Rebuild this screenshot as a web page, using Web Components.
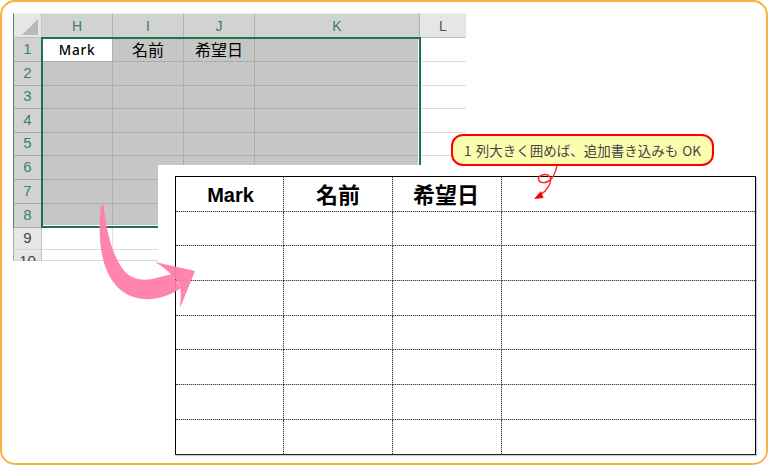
<!DOCTYPE html>
<html lang="ja">
<head>
<meta charset="utf-8">
<title>Excel</title>
<style>
  html, body { margin: 0; background: #fff; }
</style>
</head>
<body>
<sheet-frame>
  <excel-sheet></excel-sheet>
  <print-table></print-table>
  <pink-arrow></pink-arrow>
  <note-callout>1 列大きく囲めば、追加書き込みも OK</note-callout>
</sheet-frame>
<script>
// Marco naranja exterior
class SheetFrame extends HTMLElement {
  constructor () {
    super()
    this.attachShadow({ mode: 'open' })
  }

  connectedCallback () {
    this.shadowRoot.innerHTML = /* HTML */`
      <style>
        :host {
          display: block;
          position: relative;
          box-sizing: border-box;
          width: 768px;
          height: 465px;
          padding: 11px;
          border: 2px solid #fbb03f;
          border-radius: 15px;
          overflow: hidden;
          background: #fff;
        }
      </style>
      <slot></slot>
    `
  }
}

// Hoja de Excel con la seleccion
class ExcelSheet extends HTMLElement {
  static Styles = /* Css */`
    :host {
      display: block;
      position: relative;
      width: 453px;
      height: 248px;
      overflow: hidden;
      font: 14px "Liberation Sans", sans-serif;
    }
    .grid {
      display: grid;
      grid-template-columns: 29px 71px 71px 71px 165px 46px;
      grid-template-rows: 25px 24px 24px 23px 24px 23px 24px 24px 24px 22px 11px;
    }
    .head {
      display: flex;
      align-items: center;
      justify-content: center;
      box-sizing: border-box;
      background: #e6e6e6;
      color: #4a5560;
      border-right: 1px solid #c4c4c4;
      border-bottom: 1px solid #bdbdbd;
    }
    .head.on { background: #d2d2d2; color: #3c7f68; border-right-color: #b0b0b0; border-bottom-color: #a9a9a9; }
    .head.top { border-top: 1px solid #efefef; padding-top: 1px; }
    .head.row { border-left: 1px solid #4d8a70; padding-bottom: 3px; font-size: 15px; }
    .head.row.off { border-left-color: #9fb5aa; border-bottom-color: #d4d4d4; color: #444; }
    .head.row.cut { align-items: flex-start; padding: 2px 0 0; overflow: visible; }
    .corner { position: relative; background: #e6e6e6; border-left: 1px solid #4d8a70; border-top: 1px solid #efefef; border-bottom: 1px solid #bdbdbd; box-sizing: border-box; border-right: 1px solid #c4c4c4; }
    .corner::after {
      content: '';
      position: absolute;
      right: 3px;
      bottom: 2px;
      border: solid transparent;
      border-width: 0 0 16px 16px;
      border-bottom-color: #b9b9b9;
    }
    .cell {
      display: flex;
      align-items: center;
      justify-content: center;
      box-sizing: border-box;
      background: #fff;
      border-right: 1px solid #e0e0e0;
      border-bottom: 1px solid #dcdcdc;
      color: #000;
      font-family: "Noto Sans CJK JP", sans-serif;
      font-size: 16px;
      padding-bottom: 2px;
    }
    .cell.sel { background: #c6c6c6; border-right-color: #adadad; border-bottom-color: #adadad; }
    .cell.mark { background: #fff; font: 500 13.5px "Noto Sans", sans-serif; letter-spacing: .8px; padding-bottom: 0; }
    .cell.last { border-right: 0; }
    .selection {
      position: absolute;
      left: 28px;
      top: 24px;
      width: 380px;
      height: 191px;
      box-sizing: border-box;
      border: 2px solid #217346;
      box-shadow: inset -1px -1px 0 #fff;
    }
  `

  constructor () {
    super()
    this.attachShadow({ mode: 'open' })
  }

  connectedCallback () {
    this.render()
  }

  render () {
    const cols = ['H', 'I', 'J', 'K']
    const titles = ['Mark', '名前', '希望日', '']
    let html = '<div class="corner"></div>'
    cols.forEach(c => { html += `<div class="head top on">${c}</div>` })
    html += '<div class="head top" style="border-right:0">L</div>'
    for (let r = 1; r <= 10; r++) {
      const selected = r <= 8
      html += `<div class="head row ${selected ? 'on' : 'off'} ${r === 10 ? 'cut' : ''}">${r}</div>`
      cols.forEach((c, i) => {
        const isMark = r === 1 && i === 0
        html += `<div class="cell ${selected ? 'sel' : ''} ${isMark ? 'mark' : ''}">${r === 1 ? titles[i] : ''}</div>`
      })
      html += '<div class="cell last"></div>'
    }
    this.shadowRoot.innerHTML = /* HTML */`
      <style>${ExcelSheet.Styles}</style>
      <div class="grid">${html}</div>
      <div class="selection"></div>
    `
  }
}

// Tabla impresa, encima de la hoja
class PrintTable extends HTMLElement {
  static Styles = /* Css */`
    :host {
      display: block;
      position: absolute;
      left: 156px;
      top: 163px;
      right: 0;
      bottom: 0;
      box-sizing: border-box;
      padding: 11px 0 0 17px;
      background: #fff;
    }
    .table {
      display: grid;
      width: 581px;
      box-sizing: border-box;
      grid-template-columns: 108px 109px 109px 253px;
      grid-template-rows: 35px 34px 35px 35px 34px 35px 35px 34px;
      border: 1px solid #000;
      border-bottom-color: #222;
      box-shadow: 1px 1px 1px #ccc;
    }
    .td {
      box-sizing: border-box;
      border-right: 1px dotted #444;
      border-bottom: 1px dotted #444;
      background:
        linear-gradient(#c4c4c4, #c4c4c4) right top / 1px 100% no-repeat border-box,
        linear-gradient(#c4c4c4, #c4c4c4) left bottom / 100% 1px no-repeat border-box;
    }
    .td.end { border-right: 0; background: linear-gradient(#c4c4c4, #c4c4c4) left bottom / 100% 1px no-repeat border-box; }
    .td.low { border-bottom: 0; background: linear-gradient(#c4c4c4, #c4c4c4) right top / 1px 100% no-repeat border-box; }
    .td.end.low { background: none; }
    .th {
      display: flex;
      align-items: center;
      justify-content: center;
      color: #000;
      font: bold 20px "Liberation Sans", "Noto Sans CJK JP", sans-serif;
    }
    .th.mark { padding: 2px 0 0 2px; }
    .jp { font: bold 22px "Noto Sans CJK JP", sans-serif; padding-bottom: 2px; }
    .jp.wide { padding-right: 2px; }
  `

  constructor () {
    super()
    this.attachShadow({ mode: 'open' })
  }

  connectedCallback () {
    const heads = ['Mark', '名前', '希望日', '']
    let cells = ''
    heads.forEach((h, i) => {
      cells += `<div class="td th ${i > 0 ? 'jp' : 'mark'} ${i === 2 ? 'wide' : ''} ${i === 3 ? 'end' : ''}">${h}</div>`
    })
    for (let r = 1; r <= 7; r++) {
      for (let c = 0; c < 4; c++) {
        cells += `<div class="td ${c === 3 ? 'end' : ''} ${r === 7 ? 'low' : ''}"></div>`
      }
    }
    this.shadowRoot.innerHTML = /* HTML */`
      <style>${PrintTable.Styles}</style>
      <div class="table">${cells}</div>
    `
  }
}

// Flecha rosa curvada
class PinkArrow extends HTMLElement {
  constructor () {
    super()
    this.attachShadow({ mode: 'open' })
  }

  connectedCallback () {
    this.shadowRoot.innerHTML = /* HTML */`
      <style>
        :host { display: block; position: absolute; left: 88px; top: 198px; width: 120px; height: 120px; }
        svg { display: block; }
      </style>
      <svg width="120" height="120" viewBox="90 200 120 120">
        <path fill="#ff7ca9" fill-opacity=".94" d="M101 205 L103.500 205 C106 228 111 252 122 268 C130 279 140 281 152 279 L172 274 L181 288 C170 296 155 300 144 299 C126 298 112 286 105 266 C99 248 98.500 226 101 205 Z"/>
        <path fill="#ff7ca9" fill-opacity=".94" d="M155 262 L195 271 L180 308 C181 296 181 290 180 286 C176 278 168 270 155 262 Z"/>
      </svg>
    `
  }
}

// Globo amarillo con la nota
class NoteCallout extends HTMLElement {
  constructor () {
    super()
    this.attachShadow({ mode: 'open' })
  }

  connectedCallback () {
    this.shadowRoot.innerHTML = /* HTML */`
      <style>
        :host { display: block; position: absolute; left: 449px; top: 132px; width: 263px; height: 32px; }
        .bubble {
          display: flex;
          align-items: center;
          justify-content: center;
          box-sizing: border-box;
          height: 100%;
          background: #fdfdb0;
          border: 2px solid #f00;
          border-radius: 12px;
          color: #444;
          font: 13.5px "Noto Sans CJK JP", sans-serif;
          word-spacing: 1px;
          white-space: nowrap;
        }
        svg { position: absolute; left: 0; top: 31px; display: block; }
      </style>
      <div class="bubble"><slot></slot></div>
      <svg width="120" height="40" viewBox="451 165 120 40">
        <path fill="none" stroke="#f22" stroke-width="1.4" d="M557 165 C555.500 174 553 179 548 181.500 C543 184 538 182 538.500 178.500 C539 175 547 172.500 550 177 C552.500 182 547 191 540 195"/>
        <path fill="#f00" d="M534 199 L541 191 L543.500 198 Z"/>
      </svg>
    `
  }
}

customElements.define('sheet-frame', SheetFrame)
customElements.define('excel-sheet', ExcelSheet)
customElements.define('print-table', PrintTable)
customElements.define('pink-arrow', PinkArrow)
customElements.define('note-callout', NoteCallout)
</script>
</body>
</html>
